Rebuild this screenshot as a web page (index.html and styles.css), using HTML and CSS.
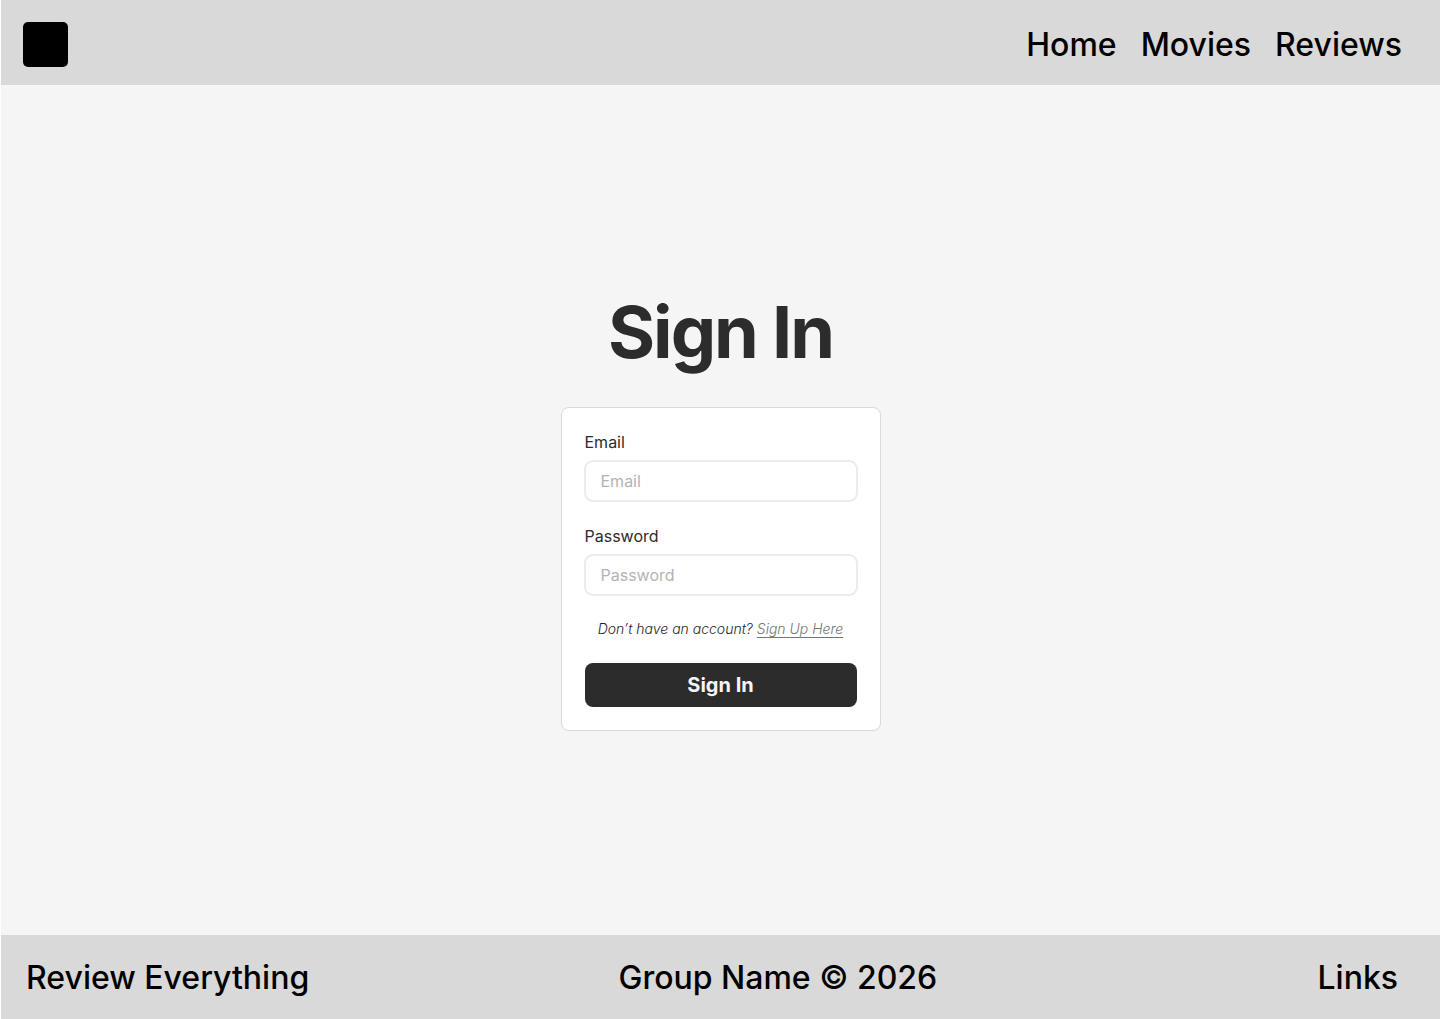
FILE: index.html
```html
<!DOCTYPE html>
<html lang="en">
<head>
<meta charset="utf-8">
<meta name="viewport" content="width=device-width, initial-scale=1">
<title>Sign In</title>
<link rel="stylesheet" href="styles.css">
</head>
<body>
<header class="bar header">
  <a class="logo" href="#" aria-label="Home page"></a>
  <nav class="nav">
    <a href="#">Home</a>
    <a href="#">Movies</a>
    <a href="#">Reviews</a>
  </nav>
</header>
<main class="main">
  <h1 class="title">Sign In</h1>
  <form class="card">
    <div class="field">
      <label for="email">Email</label>
      <input id="email" type="email" placeholder="Email">
    </div>
    <div class="field">
      <label for="password">Password</label>
      <input id="password" type="password" placeholder="Password">
    </div>
    <p class="hint">Don’t have an account? <a href="#">Sign Up Here</a></p>
    <button class="submit" type="submit">Sign In</button>
  </form>
</main>
<footer class="bar footer">
  <span>Review Everything</span>
  <span>Group Name © 2026</span>
  <a class="links" href="#">Links</a>
</footer>
</body>
</html>
```

FILE: styles.css
```css
* {
  box-sizing: border-box;
}

body {
  margin: 0;
  min-height: 100vh;
  display: flex;
  flex-direction: column;
  border-left: 1px solid #fff;
  background: #f5f5f5;
  color: #2c2c2c;
  font: 16px/22px Inter, sans-serif;
}

.bar {
  display: flex;
  align-items: center;
  background: #d9d9d9;
  color: #000;
  font-size: 32px;
  font-weight: 500;
  line-height: 40px;
}

.bar a {
  color: inherit;
  text-decoration: none;
}

.header {
  justify-content: space-between;
  padding: 22px 38px 18px 22px;
}

.logo {
  width: 45px;
  height: 45px;
  border-radius: 5px;
  background: #000;
}

.nav {
  display: flex;
  gap: 24px;
}

.main {
  flex: 1;
  display: flex;
  flex-direction: column;
  align-items: center;
  justify-content: center;
  gap: 32px;
}

.title {
  margin: 0;
  font-size: 72px;
  font-weight: 700;
  line-height: 86px;
  letter-spacing: -2px;
}

.card {
  display: flex;
  flex-direction: column;
  gap: 24px;
  width: 320px;
  padding: 23px;
  border: 1px solid #d9d9d9;
  border-radius: 8px;
  background: #fff;
}

.field {
  display: flex;
  flex-direction: column;
  gap: 8px;
}

.field input {
  height: 40px;
  padding: 0 15px;
  border: 1px solid #ececec;
  border-radius: 8px;
  background: #fff;
  box-shadow: 0 0 0 1px #ececec;
  color: inherit;
  font: inherit;
}

.field input::placeholder {
  color: #b3b3b3;
}

.hint {
  margin: 0;
  color: #1e1e1e;
  font-size: 14px;
  font-weight: 300;
  line-height: 20px;
  font-style: italic;
  text-align: center;
}

.hint a {
  color: #757575;
  text-underline-offset: 3px;
}

.submit {
  height: 44px;
  border: 0;
  border-radius: 8px;
  background: #2c2c2c;
  color: #f5f5f5;
  font: 700 20px/24px Inter, sans-serif;
}

.footer {
  display: grid;
  grid-template-columns: 9fr auto 7fr;
  padding: 23px 42px 21px 25px;
}

.links {
  justify-self: end;
}
```
